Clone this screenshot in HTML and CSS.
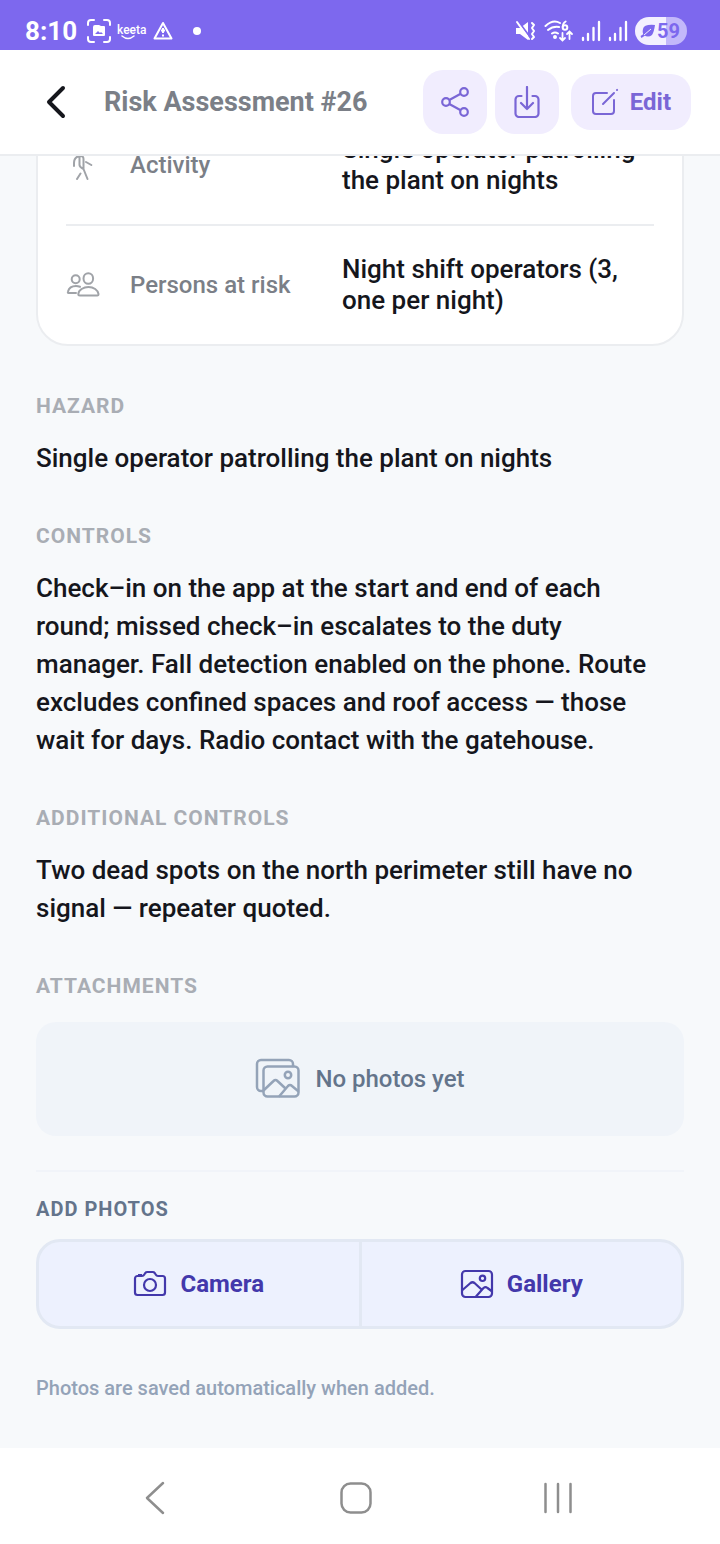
FILE: index.html
```html
<!DOCTYPE html>
<html lang="en">
<head>
    <meta charset="UTF-8">
    <meta name="viewport" content="width=device-width, initial-scale=1.0">
    <title>Risk Assessment #26</title>
    <link rel="stylesheet" href="styles.css">
</head>
<body>

    <div class="status-bar">
        <div class="status-left">
            <span class="clock">8:10</span>
            <svg width="24" height="24" viewBox="0 0 24 24" fill="none" stroke="#fff" stroke-width="2" stroke-linecap="round">
                <path d="M1 6V4a3 3 0 0 1 3-3h3M17 1h3a3 3 0 0 1 3 3v2M23 18v2a3 3 0 0 1-3 3h-3M7 23H4a3 3 0 0 1-3-3v-2"/>
                <path d="M8 6h4l2 1h3a1 1 0 0 1 1 1v8a1 1 0 0 1-1 1H7a1 1 0 0 1-1-1V8a2 2 0 0 1 2-2z" fill="#fff" stroke="none"/>
                <path d="M8 15l3-3 2 2 1-1 2 2z" fill="#7d68ee" stroke="none"/>
            </svg>
            <svg class="keeta" width="28" height="20" viewBox="0 0 28 20">
                <text x="0" y="13" font-size="12" font-weight="500" fill="#fff">keeta</text>
                <path d="M5 15q6 5 12 0" fill="none" stroke="#fff" stroke-width="1.5" stroke-linecap="round"/>
            </svg>
            <svg class="warn" width="20" height="20" viewBox="0 0 20 20" fill="none" stroke="#fff" stroke-width="2" stroke-linejoin="round">
                <path d="M10 2L18.500 17.500H1.500z"/>
                <path d="M10 7v5M10 13.500v2M8 9.500h4"/>
            </svg>
            <span class="dot"></span>
        </div>
        <div class="status-right">
            <svg width="22" height="22" viewBox="0 0 22 22" fill="#fff">
                <path d="M1 8h4l8-6v18l-8-6H1z"/>
                <path d="M3 1l12 16" stroke="#7d68ee" stroke-width="2"/>
                <path d="M2 2l12 17" stroke="#fff" stroke-width="2" stroke-linecap="round"/>
                <path d="M17 3l2 2-2 3 2 3-2 3 2 3-2 2" fill="none" stroke="#fff" stroke-width="2" stroke-linecap="round" stroke-linejoin="round"/>
            </svg>
            <svg width="30" height="24" viewBox="0 0 30 24" fill="none" stroke="#fff" stroke-width="2" stroke-linecap="round">
                <path d="M1.500 7Q9 0 16 4M4 11q5-4 11-3M8 14.500q3-2 6 0"/>
                <circle cx="11" cy="18" r="1" fill="#fff"/>
                <circle cx="21" cy="8.500" r="2.300"/>
                <path d="M18.700 8q0-4 3-5.500M18.500 14v7M16 19l2.500 2.500L21 19M25.500 20v-7M23 15l2.500-2.500L28 15" stroke-width="1.800"/>
            </svg>
            <svg width="20" height="22" viewBox="0 0 20 22" fill="none" stroke="#fff" stroke-width="2.300" stroke-linecap="round">
                <path d="M2 18v2M7 14v6M12.500 8v12M18 2v18"/>
            </svg>
            <svg width="20" height="22" viewBox="0 0 20 22" fill="none" stroke="#fff" stroke-width="2.300" stroke-linecap="round">
                <path d="M2 18v2M7 14v6M12.500 8v12M18 2v18"/>
            </svg>
            <div class="battery">
                <svg width="16" height="16" viewBox="0 0 16 16" fill="#7d68ee">
                    <path d="M15 2Q4 1 3 6q-1 4 1 6 4 3 8 0 2-3 3-10z"/>
                    <path d="M1 14Q5 12 10 7" fill="none" stroke="#7d68ee" stroke-width="2"/>
                    <path d="M4 12l7-6" stroke="#f3f0ff" stroke-width="1"/>
                </svg>
                <span>59</span>
            </div>
        </div>
    </div>

    <header class="header">
        <button class="back-btn" aria-label="Back">
            <svg width="22" height="34" viewBox="0 0 22 34" fill="none" stroke="#15161c" stroke-width="4" stroke-linecap="round" stroke-linejoin="round">
                <path d="M18 3L4 17l14 14"/>
            </svg>
        </button>
        <h1>Risk Assessment #26</h1>
        <div class="actions">
            <button class="icon-btn" aria-label="Share">
                <svg width="32" height="32" viewBox="0 0 32 32" fill="none" stroke="#7a66d6" stroke-width="2.200">
                    <circle cx="7" cy="16" r="3.800"/>
                    <circle cx="25" cy="6" r="3.800"/>
                    <circle cx="25" cy="26" r="3.800"/>
                    <path d="M10.300 14L21.700 7.800M10.300 18l11.400 6.200"/>
                </svg>
            </button>
            <button class="icon-btn" aria-label="Download">
                <svg width="32" height="32" viewBox="0 0 32 32" fill="none" stroke="#7a66d6" stroke-width="2.200" stroke-linecap="round" stroke-linejoin="round">
                    <path d="M10.500 10H8a3.500 3.500 0 0 0-3.500 3.500v14A3.500 3.500 0 0 0 8 31h16a3.500 3.500 0 0 0 3.500-3.500v-14A3.500 3.500 0 0 0 24 10h-2.500"/>
                    <path d="M16 1v22M10 17l6 6 6-6"/>
                </svg>
            </button>
            <button class="edit-btn">
                <svg width="28" height="28" viewBox="0 0 28 28" fill="none" stroke="#7a66d6" stroke-width="2" stroke-linecap="round">
                    <path d="M16 5H5a3 3 0 0 0-3 3v15a3 3 0 0 0 3 3h15a3 3 0 0 0 3-3V12"/>
                    <path d="M12 16L23 5M26 2l.1-.1"/>
                </svg>
                Edit
            </button>
        </div>
    </header>

    <main class="content">
        <div class="card">
            <div class="row">
                <svg width="34" height="34" viewBox="0 0 34 34" fill="none" stroke="#a0a3a8" stroke-width="2" stroke-linecap="round" stroke-linejoin="round">
                    <circle cx="16" cy="3" r="2.500"/>
                    <path d="M8 18v-3q0-6 5.500-7 4-.5 4 3v10l4 10M13.500 9v8q0 2 4 4M14.500 25.500l-3.500 5.500M20 14l5.300 3"/>
                </svg>
                <span class="label">Activity</span>
                <span class="value">Single operator patrolling the plant on nights</span>
            </div>
            <div class="row">
                <svg width="34" height="34" viewBox="0 0 34 34" fill="none" stroke="#a0a3a8" stroke-width="2" stroke-linecap="round" stroke-linejoin="round">
                    <circle cx="9.700" cy="11.300" r="4"/>
                    <ellipse cx="22.300" cy="10.500" rx="4.800" ry="5.300"/>
                    <path d="M22.500 19c-5 0-10 3-10.200 7q0 1.500 1.500 1.500h17.400q1.500 0 1.300-1.500c-.5-4-5-7-10-7z"/>
                    <path d="M10 25H2.500Q1.500 25 2 23.500c1-4 5-5.500 8-5.500q2 0 4 .800"/>
                </svg>
                <span class="label">Persons at risk</span>
                <span class="value">Night shift operators (3, one per night)</span>
            </div>
        </div>

        <section class="section">
            <h2>Hazard</h2>
            <p>Single operator patrolling the plant on nights</p>
        </section>

        <section class="section">
            <h2>Controls</h2>
            <p>Check–in on the app at the start and end of each round; missed check–in escalates to the duty manager. Fall detection enabled on the phone. Route excludes confined spaces and roof access — those wait for days. Radio contact with the gatehouse.</p>
        </section>

        <section class="section">
            <h2>Additional controls</h2>
            <p>Two dead spots on the north perimeter still have no signal — repeater quoted.</p>
        </section>

        <section class="section">
            <h2>Attachments</h2>
            <div class="empty">
                <svg width="46" height="42" viewBox="0 0 46 42" fill="none" stroke="#94a3b8" stroke-width="2.500" stroke-linecap="round" stroke-linejoin="round">
                    <path d="M8 33H6a4 4 0 0 1-4-4V6a4 4 0 0 1 4-4h28a4 4 0 0 1 4 4v2"/>
                    <rect x="8.500" y="8.500" width="35" height="30" rx="4"/>
                    <circle cx="33" cy="17" r="3.200"/>
                    <path d="M9 32l9.500-9q2-2 4 0l8 7.500M24.500 38l8.500-10q2-2 4 0l6 5"/>
                </svg>
                <span>No photos yet</span>
            </div>
        </section>

        <div class="add-photos">
            <h2>Add photos</h2>
            <div class="photo-btns">
                <button>
                    <svg width="34" height="28" viewBox="0 0 34 28" fill="none" stroke="#4338ab" stroke-width="2.200" stroke-linejoin="round">
                        <path d="M5 6h4q1.500 0 2.300-1.500l1-1.500q.7-1 2-1h5.400q1.300 0 2 1l1 1.500Q23.500 6 25 6h4.500A2.500 2.500 0 0 1 32 8.500v14a2.500 2.500 0 0 1-2.500 2.500h-25A2.500 2.500 0 0 1 2 22.500v-14A2.500 2.500 0 0 1 4.500 6zM5 5h4"/>
                        <circle cx="17" cy="15" r="6"/>
                    </svg>
                    Camera
                </button>
                <button>
                    <svg width="34" height="30" viewBox="0 0 34 30" fill="none" stroke="#4338ab" stroke-width="2.200" stroke-linecap="round" stroke-linejoin="round">
                        <rect x="2" y="2" width="30" height="26" rx="3.500"/>
                        <circle cx="22.500" cy="9.300" r="2.700"/>
                        <path d="M2.500 21l8-7q2-1.500 4 0l6.500 6M16 27.500l7.500-8.500q2-1.700 4 0l4 3"/>
                    </svg>
                    Gallery
                </button>
            </div>
            <p class="hint">Photos are saved automatically when added.</p>
        </div>
    </main>

    <nav class="nav-bar">
        <button aria-label="Back">
            <svg width="34" height="34" viewBox="0 0 34 34" fill="none" stroke="#8e8e8e" stroke-width="2.500" stroke-linecap="round" stroke-linejoin="round">
                <path d="M25 2L9 17l16 15"/>
            </svg>
        </button>
        <button aria-label="Home">
            <svg width="34" height="34" viewBox="0 0 34 34" fill="none" stroke="#8e8e8e" stroke-width="2.500">
                <rect x="2.500" y="2.500" width="29" height="29" rx="9"/>
            </svg>
        </button>
        <button aria-label="Recent apps">
            <svg width="34" height="34" viewBox="0 0 34 34" fill="none" stroke="#8e8e8e" stroke-width="2.500" stroke-linecap="round">
                <path d="M4.500 3v28M17 3v28M29.500 3v28"/>
            </svg>
        </button>
    </nav>

</body>
</html>
```
FILE: styles.css
```css
* {
    box-sizing: border-box;
}

body {
    font-family: Roboto, Arial, sans-serif;
    margin: 0;
    height: 100vh;
    display: flex;
    flex-direction: column;
    background: #f7f9fb;
    color: #15161c;
}

h1, h2, p {
    margin: 0;
}

button {
    font-family: inherit;
    border: none;
    padding: 0;
    background: none;
    cursor: pointer;
}

svg {
    display: block;
    flex-shrink: 0;
}

/* phone status bar */
.status-bar {
    flex-shrink: 0;
    display: flex;
    justify-content: space-between;
    height: 50px;
    padding: 12px 33px 0 25px;
    background: #7d68ee;
    color: white;
}

.status-left,
.status-right {
    display: flex;
    align-items: center;
}

.clock {
    font-size: 26px;
    font-weight: 700;
    margin-right: 10px;
}

.keeta {
    margin-left: 6px;
    overflow: visible;
}

.warn {
    margin-left: 8px;
}

.dot {
    width: 8px;
    height: 8px;
    margin-left: 20px;
    border-radius: 50%;
    background: white;
}

.status-right {
    gap: 7px;
}

.battery {
    display: flex;
    align-items: center;
    gap: 1px;
    height: 28px;
    padding: 0 7px 0 5px;
    border-radius: 14px;
    background: linear-gradient(to right, #f3f0ff 59%, #c3b8fa 59%);
    color: #7d68ee;
    font-size: 20px;
    font-weight: 700;
}

/* page header */
.header {
    flex-shrink: 0;
    display: flex;
    align-items: center;
    height: 106px;
    padding: 0 29px 0 45px;
    background: white;
    border-bottom: 2px solid #ebedf0;
}

.header h1 {
    flex: 1;
    margin-left: 37px;
    font-size: 27px;
    font-weight: 700;
    color: #7b7f87;
}

.actions {
    display: flex;
    align-items: center;
    gap: 8px;
}

.icon-btn,
.edit-btn {
    display: flex;
    align-items: center;
    justify-content: center;
    background: #f1edfe;
    border-radius: 20px;
}

.icon-btn {
    width: 64px;
    height: 64px;
}

.edit-btn {
    gap: 11px;
    height: 56px;
    margin-left: 4px;
    padding: 0 20px;
    font-size: 24px;
    font-weight: 700;
    color: #7a66d6;
}

/* scrolled to the end */
.content {
    flex: 1;
    min-height: 0;
    overflow: hidden;
    display: flex;
    flex-direction: column;
    justify-content: flex-end;
    padding: 0 36px 47px;
}

.card {
    margin-bottom: 1px;
    padding: 0 28px;
    background: white;
    border: 2px solid #ebedf0;
    border-radius: 32px;
}

.row {
    display: grid;
    grid-template-columns: 34px 182px 1fr;
    align-items: center;
    column-gap: 30px;
    padding: 28px 0;
}

.row + .row {
    border-top: 2px solid #ebedf0;
}

.label {
    font-size: 24px;
    font-weight: 500;
    color: #7b7f87;
}

.value {
    font-size: 26px;
    font-weight: 500;
    line-height: 31px;
}

.section {
    margin-top: 46px;
}

.section h2,
.add-photos h2 {
    font-size: 21px;
    font-weight: 700;
    line-height: 26px;
    letter-spacing: 1px;
    text-transform: uppercase;
    color: #a9adb4;
}

.section p {
    margin-top: 20px;
    padding-right: 24px;
    font-size: 26px;
    font-weight: 500;
    line-height: 38px;
}

.empty {
    display: flex;
    align-items: center;
    justify-content: center;
    gap: 14px;
    height: 114px;
    margin-top: 23px;
    border-radius: 20px;
    background: #f0f4f9;
    color: #64748b;
    font-size: 24px;
    font-weight: 500;
}

.add-photos {
    margin-top: 34px;
    padding-top: 24px;
    border-top: 2px solid #f1f4f9;
}

.add-photos h2 {
    font-size: 20px;
    color: #64748b;
}

.photo-btns {
    display: flex;
    height: 90px;
    margin-top: 17px;
    border: 3px solid #e2e8f3;
    border-radius: 24px;
    background: #edf1fe;
    overflow: hidden;
}

.photo-btns button {
    flex: 1;
    display: flex;
    align-items: center;
    justify-content: center;
    gap: 13px;
    font-size: 24px;
    font-weight: 700;
    color: #4338ab;
}

.photo-btns button + button {
    border-left: 3px solid #e2e8f3;
}

.hint {
    margin-top: 46px;
    font-size: 20px;
    font-weight: 500;
    line-height: 26px;
    color: #94a3b8;
}

/* system navigation */
.nav-bar {
    flex-shrink: 0;
    display: grid;
    grid-template-columns: repeat(3, 1fr);
    height: 96px;
    padding: 4px 61px 0 54px;
    background: white;
}

.nav-bar button {
    display: flex;
    align-items: center;
    justify-content: center;
}
```
